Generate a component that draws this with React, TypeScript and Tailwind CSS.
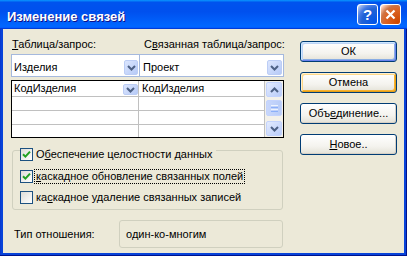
import React from "react";

function Chevron({ up = false }: { up?: boolean }) {
  return (
    <svg width="9" height="6" viewBox="0 0 9 6" className={up ? "rotate-180" : ""}>
      <path d="M1 1 L4.5 4.5 L8 1" fill="none" stroke="#4D6185" strokeWidth="2" />
    </svg>
  );
}

function DropBtn({ className }: { className: string }) {
  return (
    <div
      className={`flex shrink-0 items-center justify-center rounded-[2px] border border-[#BCCDF5] bg-[linear-gradient(135deg,#DCE6FE,#B6CAF7)] ${className}`}
    >
      <Chevron />
    </div>
  );
}

function Check({ checked }: { checked: boolean }) {
  return (
    <div className="flex h-[13px] w-[13px] shrink-0 items-center justify-center border border-[#1C5180] bg-[linear-gradient(135deg,#DCDCD7,#FFFFFF)]">
      {checked && (
        <svg width="9" height="9" viewBox="0 0 9 9">
          <path d="M1 4.2 L3.4 6.6 L8 1.6" fill="none" stroke="#21A121" strokeWidth="2" />
        </svg>
      )}
    </div>
  );
}

function XPButton({
  children,
  ring,
}: {
  children: React.ReactNode;
  ring: string;
}) {
  return (
    <div
      className={`flex h-[21px] w-[97px] items-center justify-center rounded-[3px] border border-[#003C74] bg-[linear-gradient(180deg,#FFFFFF,#F4F3EE_60%,#E3E1D6)] text-[11px] leading-[13px] ${ring}`}
    >
      {children}
    </div>
  );
}

function ScrollBtn({ up }: { up?: boolean }) {
  return (
    <div className="flex h-[15px] w-[16px] items-center justify-center rounded-[2px] border border-[#C3D3FD] bg-[linear-gradient(135deg,#E3EBFE,#B9CCF9)]">
      <Chevron up={up} />
    </div>
  );
}

export default function App() {
  return (
    <div className="flex h-[256px] w-[407px] flex-col bg-[#0843D9] font-['Liberation_Sans',Arial,sans-serif] text-black shadow-[inset_-1px_-1px_#00138C,inset_1px_0_#0A3ACF]">
      {/* Title bar */}
      <div className="flex h-[29px] shrink-0 items-center pl-[7px] pr-[6px] bg-[linear-gradient(180deg,#0997ff,#0053ee_8%,#0050ee_40%,#06f_88%,#06f_93%,#005bff_95%,#003dd7_96%,#003dd7)]">
        <span className="pt-[3px] text-[13px] font-bold leading-[15px] text-white [text-shadow:1px_1px_#0F1089]">
          Изменение связей
        </span>
        <div className="ml-auto flex gap-[2px]">
          <div className="flex h-[21px] w-[21px] items-center justify-center rounded-[3px] border border-white bg-[radial-gradient(circle_at_90%_90%,#0054E9_0%,#2263D5_55%,#4479E4_70%,#A3BBEC_90%,#FFFFFF_100%)]">
            <span className="text-[15px] font-bold leading-[15px] text-white">?</span>
          </div>
          <div className="flex h-[21px] w-[21px] items-center justify-center rounded-[3px] border border-white bg-[radial-gradient(circle_at_90%_90%,#CC4600_0%,#DC6527_55%,#CD7546_70%,#FFCCB2_90%,#FFFFFF_100%)]">
            <svg width="11" height="11" viewBox="0 0 11 11">
              <path d="M1.5 1.5 L9.5 9.5 M9.5 1.5 L1.5 9.5" stroke="white" strokeWidth="2.2" />
            </svg>
          </div>
        </div>
      </div>

      {/* Body */}
      <div className="mx-[3px] mb-[3px] flex flex-1 bg-[#ECE9D8] text-[11px] leading-[13px]">
        {/* Left column */}
        <div className="ml-[8px] flex w-[273px] flex-col pt-[9px]">
          <div className="flex h-[13px] whitespace-nowrap">
            <div className="w-[129px] shrink-0 pl-[1px]">
              <span className="underline underline-offset-[1px]">Т</span>аблица/запрос:
            </div>
            <div className="flex-1 pl-[4px]">
              С<span className="underline underline-offset-[1px]">в</span>язанная таблица/запрос:
            </div>
          </div>

          {/* combos */}
          <div className="mt-[3px] flex h-[23px] border border-[#A5B9DD] bg-white">
            <div className="flex w-[128px] items-end justify-between border-r border-[#A5B9DD] pb-[1px] pl-[2px] pr-[1px]">
              <span className="mb-[1px]">Изделия</span>
              <DropBtn className="h-[15px] w-[14px]" />
            </div>
            <div className="flex flex-1 items-end justify-between pb-[1px] pl-[3px] pr-[1px]">
              <span className="mb-[1px]">Проект</span>
              <DropBtn className="h-[15px] w-[15px]" />
            </div>
          </div>

          {/* grid */}
          <div className="mt-[3px] flex h-[58px] border border-black bg-white">
            <div className="flex w-[253px] flex-col">
              <div className="flex h-[16px] border-b border-[#C0C0C0]">
                <div className="flex w-[127px] items-end justify-between border-r border-[#C0C0C0] pb-[1px] pl-[2px]">
                  <span>КодИзделия</span>
                  <DropBtn className="h-[11px] w-[15px]" />
                </div>
                <div className="flex flex-1 items-end border-r border-[#C0C0C0] pb-[1px] pl-[3px]">
                  КодИзделия
                </div>
              </div>
              {[0, 1].map((i) => (
                <div key={i} className="flex h-[14px] border-b border-[#C0C0C0]">
                  <div className="w-[127px] border-r border-[#C0C0C0]" />
                  <div className="flex-1 border-r border-[#C0C0C0]" />
                </div>
              ))}
              <div className="flex flex-1">
                <div className="w-[127px] border-r border-[#C0C0C0]" />
                <div className="flex-1 border-r border-[#C0C0C0]" />
              </div>
            </div>
            <div className="flex flex-1 flex-col justify-between bg-[#F3F1EA] px-[1px] py-[1px]">
              <div className="flex flex-col">
                <ScrollBtn up />
                <div className="mt-[3px] flex h-[16px] w-[16px] flex-col items-center justify-center gap-[1px] rounded-[2px] border border-[#C3D3FD] bg-[linear-gradient(90deg,#C8D7FC,#B8CCF8)]">
                  <div className="h-[1px] w-[7px] bg-[#EEF4FE]" />
                  <div className="h-[1px] w-[7px] bg-[#8CB0F8]" />
                  <div className="h-[1px] w-[7px] bg-[#EEF4FE]" />
                  <div className="h-[1px] w-[7px] bg-[#8CB0F8]" />
                </div>
              </div>
              <ScrollBtn />
            </div>
          </div>

          {/* group */}
          <div className="mx-[1px] mt-[12px] flex flex-col rounded-[3px] border border-[#D0D0BF] pb-[5px]">
            <div className="-mt-[3px] ml-[7px] flex h-[13px] w-fit items-center bg-[#ECE9D8] pr-[2px]">
              <Check checked />
              <span className="ml-[1px] border border-transparent px-[1px]">
                О<span className="underline underline-offset-[1px]">б</span>еспечение целостности данных
              </span>
            </div>
            <div className="ml-[7px] mt-[9px] flex h-[13px] items-center">
              <Check checked />
              <span className="ml-[1px] border border-dotted border-black px-[1px]">
                <span className="underline underline-offset-[1px]">к</span>аскадное обновление связанных полей
              </span>
            </div>
            <div className="ml-[7px] mt-[8px] flex h-[13px] items-center">
              <Check checked={false} />
              <span className="ml-[1px] border border-transparent px-[1px]">
                ка<span className="underline underline-offset-[1px]">с</span>кадное удаление связанных записей
              </span>
            </div>
          </div>

          {/* relationship type */}
          <div className="mt-[10px] flex items-center">
            <div className="ml-[3px] w-[105px]">Тип отношения:</div>
            <div className="flex h-[28px] w-[164px] items-center rounded-[3px] border border-[#D0D0BF] pl-[6px]">
              один-ко-многим
            </div>
          </div>
        </div>

        {/* Right column */}
        <div className="ml-[16px] flex w-[97px] flex-col gap-[10px] pt-[12px]">
          <XPButton ring="shadow-[inset_1px_1px_#CEE7FF,inset_-1px_-1px_#6982EE,inset_2px_2px_#BCD4F6,inset_-2px_-2px_#89ADE4]">
            ОК
          </XPButton>
          <XPButton ring="shadow-[inset_1px_1px_#FFF0CF,inset_-1px_-1px_#E5A01A,inset_2px_2px_#FDD889,inset_-2px_-2px_#F8B330]">
            Отмена
          </XPButton>
          <XPButton ring="shadow-[inset_-1px_-1px_#D6D0C5]">
            <span>
              Объ<span className="underline underline-offset-[1px]">е</span>динение...
            </span>
          </XPButton>
          <XPButton ring="shadow-[inset_-1px_-1px_#D6D0C5]">
            <span>
              <span className="underline underline-offset-[1px]">Н</span>овое..
            </span>
          </XPButton>
        </div>
      </div>
    </div>
  );
}
